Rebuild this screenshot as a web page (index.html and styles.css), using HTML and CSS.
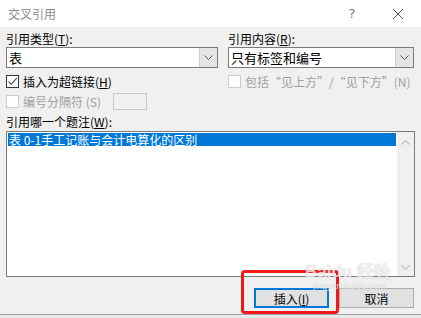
FILE: index.html
```html
<!DOCTYPE html>
<html>
<head>
<meta charset="utf-8">
<link rel="stylesheet" href="styles.css">
</head>
<body>
<div class="dlg">
  <div class="titlebar">
    <span class="title">交叉引用</span>
    <span class="tb-help">?</span>
    <span class="tb-close">
      <svg width="12" height="12" viewBox="0 0 12 12"><path d="M1 1L11 11M11 1L1 11" stroke="#555" stroke-width="1" fill="none"/></svg>
    </span>
  </div>
  <div class="body">
    <div class="cols">
      <div class="col">
        <div class="label">引用类型(<u>T</u>):</div>
        <div class="select"><span class="sv">表</span><span class="arrow"><svg width="9" height="5" viewBox="0 0 9 5"><path d="M0.5 0.5L4.5 4.5L8.5 0.5" stroke="#555" fill="none"/></svg></span></div>
        <div class="check"><span class="box on"><svg width="11" height="11" viewBox="0 0 11 11"><path d="M1.5 5.5L4.2 8.5L9.8 2" stroke="#333" stroke-width="1.1" fill="none"/></svg></span>插入为超链接(<u>H</u>)</div>
        <div class="check dis"><span class="box"></span>编号分隔符 (S)<span class="sep-input"></span></div>
      </div>
      <div class="col">
        <div class="label">引用内容(<u>R</u>):</div>
        <div class="select"><span class="sv">只有标签和编号</span><span class="arrow"><svg width="9" height="5" viewBox="0 0 9 5"><path d="M0.5 0.5L4.5 4.5L8.5 0.5" stroke="#555" fill="none"/></svg></span></div>
        <div class="check dis"><span class="box"></span>包括“见上方”/“见下方”(N)</div>
      </div>
    </div>
    <div class="label lb-label">引用哪一个题注(<u>W</u>):</div>
    <div class="listbox">
      <div class="items"><div class="item sel">表 0-1手工记账与会计电算化的区别</div></div>
      <div class="sbar">
        <svg width="9" height="5" viewBox="0 0 9 5"><path d="M0.5 4.5L4.5 0.5L8.5 4.5" stroke="#c4c4c4" stroke-width="1.4" fill="none"/></svg>
        <svg width="9" height="5" viewBox="0 0 9 5"><path d="M0.5 0.5L4.5 4.5L8.5 0.5" stroke="#c4c4c4" stroke-width="1.4" fill="none"/></svg>
      </div>
    </div>
    <div class="buttons">
      <div class="btn primary">插入(<u>I</u>)</div>
      <div class="btn">取消</div>
    </div>
  </div>
  <div class="highlight"></div>
  <div class="watermark">Bai<span class="paw">d</span>u 经验<div class="wm2">jingyan.baidu.com</div></div>
</div>
</body>
</html>
```

FILE: styles.css
```css
* { box-sizing: border-box; }
html, body { margin: 0; padding: 0; }
body {
  width: 421px; height: 318px; overflow: hidden;
  background: #e9e9e9;
  font-family: "Noto Sans CJK SC", "Noto Sans", sans-serif;
  font-size: 12px; color: #000;
}
u { text-decoration: underline; text-underline-offset: 1px; }
.dlg { position: relative; width: 421px; height: 315px; background: #f0f0f0; border-bottom: 1px solid #a0a0a0; }
.titlebar {
  height: 27px; background: #fff; display: flex; align-items: center;
  padding-left: 8px; color: #8a8a8a;
}
.title { font-size: 12px; flex: 1; letter-spacing: 0; }
.tb-help { width: 46px; text-align: center; font-size: 13px; color: #777; font-family: "DejaVu Sans", sans-serif; }
.tb-close { width: 46px; display: flex; justify-content: center; }
.body { padding: 3px 6px 0 6px; }
.cols { display: grid; grid-template-columns: 212px 186px; column-gap: 10px; }
.label { height: 17px; line-height: 17px; }
.select {
  height: 21px; background: #fff; border: 1px solid #7a7a7a;
  display: flex; align-items: stretch;
}
.sv { flex: 1; padding-left: 2px; line-height: 19px; font-size: 13px; }
.arrow {
  width: 18px; background: #e5e5e5; border-left: 1px solid #cfcfcf;
  display: flex; align-items: center; justify-content: center;
}
.check { display: flex; align-items: center; height: 20px; margin-top: 3px; }
.check + .check { margin-top: 0; }
.box {
  width: 13px; height: 13px; border: 1px solid #333; background: #fff;
  margin-right: 4px; display: flex; align-items: center; justify-content: center;
}
.dis { color: #a0a0a0; }
.dis .box { border-color: #cccccc; }
.sep-input { width: 34px; height: 17px; border: 1px solid #c8c8c8; background: #f0f0f0; margin-left: 12px; }
.lb-label { margin-top: 2px; }
.listbox {
  margin-top: 1px; height: 146px; width: 409px; border: 1px solid #7a7a7a; background: #fff;
  display: flex;
}
.items { flex: 1; padding: 1px 1px; }
.item { height: 13px; line-height: 13px; }
.item.sel { background: #0078d7; color: #fff; padding-left: 1px; }
.sbar {
  width: 17px; background: #f0f0f0; display: flex; flex-direction: column;
  justify-content: space-between; align-items: center; padding: 8px 0 6px;
}
.buttons { display: flex; justify-content: flex-end; gap: 10px; margin-top: 11px; padding-right: 1px; }
.btn {
  width: 75px; height: 20px; border: 1px solid #adadad; background: #e1e1e1;
  display: flex; align-items: center; justify-content: center;
}
.btn.primary { border: 2px solid #0078d7; }
.highlight {
  position: absolute; left: 241px; top: 270px; width: 98px; height: 44px;
  border: 3px solid #f01818; border-radius: 4px;
}
.watermark {
  position: absolute; left: 305px; top: 263px; color: rgba(255,255,255,0.7);
  font-family: "Liberation Sans", sans-serif; font-size: 17px; font-weight: bold;
  text-shadow: 0 0 1px rgba(140,140,140,0.5); line-height: 18px;
}
.wm2 { font-size: 9px; font-weight: normal; margin-left: 8px; line-height: 10px; }
```
